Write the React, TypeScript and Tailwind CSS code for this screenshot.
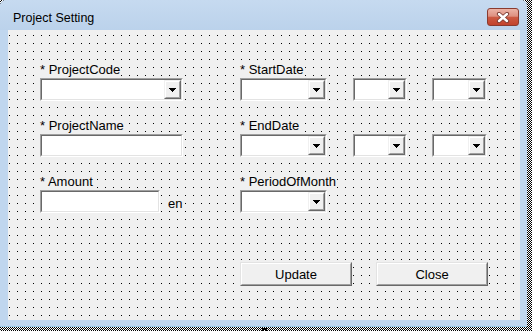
import React from "react";

const FONT = "font-['Liberation_Sans',Arial,sans-serif]";

function Arrow() {
  return (
    <svg width="7" height="4" viewBox="0 0 7 4" shapeRendering="crispEdges">
      <rect x="0" y="0" width="7" height="1" fill="#000" />
      <rect x="1" y="1" width="5" height="1" fill="#000" />
      <rect x="2" y="2" width="3" height="1" fill="#000" />
      <rect x="3" y="3" width="1" height="1" fill="#000" />
    </svg>
  );
}

function DropBtn() {
  return (
    <div className="w-[17px] h-full border border-t-[#f0f0f0] border-l-[#f0f0f0] border-r-[#696969] border-b-[#696969] bg-[#f0f0f0]">
      <div className="w-full h-full border border-t-white border-l-white border-r-[#a0a0a0] border-b-[#a0a0a0] flex items-center justify-center">
        <Arrow />
      </div>
    </div>
  );
}

function Sunken({ w, combo }: { w: string; combo?: boolean }) {
  return (
    <div className={`${w} h-[23px] flex border border-t-[#a0a0a0] border-l-[#a0a0a0] border-r-white border-b-white`}>
      <div className="flex-1 flex justify-end border border-t-[#696969] border-l-[#696969] border-r-[#e3e3e3] border-b-[#e3e3e3] bg-white">
        {combo ? <DropBtn /> : null}
      </div>
    </div>
  );
}

function Label({ text }: { text: string }) {
  return (
    <div className="h-[15px] flex">
      <span className="text-[13px] leading-[15px] text-black bg-[#f0f0f0] pr-[1px] whitespace-pre">{text}</span>
    </div>
  );
}

function Btn({ text }: { text: string }) {
  return (
    <div className="w-[112px] h-[24px] border border-t-[#e3e3e3] border-l-[#e3e3e3] border-r-[#696969] border-b-[#696969] bg-[#f0f0f0]">
      <div className="w-full h-full border border-t-white border-l-white border-r-[#a0a0a0] border-b-[#a0a0a0] flex items-center justify-center text-[13px] leading-[15px] text-black">
        {text}
      </div>
    </div>
  );
}

function DateRow() {
  return (
    <div className="flex">
      <Sunken w="w-[87px]" combo />
      <div className="ml-[26px]">
        <Sunken w="w-[54px]" combo />
      </div>
      <div className="ml-[25px]">
        <Sunken w="w-[55px]" combo />
      </div>
    </div>
  );
}

export default function App() {
  return (
    <div
      className={`${FONT} relative w-[532px] h-[331px] overflow-hidden bg-white bg-[image:conic-gradient(#000_25%,#fff_0_50%,#000_0_75%,#fff_0)] bg-[length:2px_2px]`}
    >
      <div className="w-[527px] h-[327px] rounded-t-[6px] bg-[#c0d6ee] flex flex-col border-b border-b-[#9ccbe8]">
        {/* Title bar */}
        <div className="h-[30px] flex justify-between items-start bg-[linear-gradient(to_bottom,#c6daf0,#bbd2eb)] rounded-t-[6px]">
          <div className="pl-[13px] pt-[11px] text-[12.5px] leading-[15px] text-black">Project Setting</div>
          <div className="mt-[8px] mr-[8px] w-[32px] h-[18px] rounded-[3px] border border-[#8a3b2f] bg-[linear-gradient(to_bottom,#ecb4a7_0%,#de9080_45%,#cc5a43_52%,#c2432d_100%)] flex items-center justify-center">
            <svg width="14" height="11" viewBox="0 0 14 11">
              <path d="M3 2 L11 9 M11 2 L3 9" stroke="#7a3b33" strokeWidth="4.2" strokeLinecap="round" />
              <path d="M3 2 L11 9 M11 2 L3 9" stroke="#ffffff" strokeWidth="2.4" strokeLinecap="round" />
            </svg>
          </div>
        </div>
        {/* Client area */}
        <div className="ml-[8px] w-[512px] h-[290px] bg-[#f0f0f0] bg-[image:conic-gradient(at_1px_1px,transparent_270deg,#000_0)] bg-[length:8px_8px] bg-[position:1px_5px]">
          <div className="flex flex-col pt-[32px] pl-[32px]">
            {/* Row 1 */}
            <div className="flex">
              <div className="w-[200px] flex flex-col gap-px">
                <Label text="* ProjectCode" />
                <Sunken w="w-[143px]" combo />
              </div>
              <div className="flex flex-col gap-px">
                <Label text="* StartDate" />
                <DateRow />
              </div>
            </div>
            {/* Row 2 */}
            <div className="flex mt-[17px]">
              <div className="w-[200px] flex flex-col gap-px">
                <Label text="* ProjectName" />
                <Sunken w="w-[143px]" />
              </div>
              <div className="flex flex-col gap-px">
                <Label text="* EndDate" />
                <DateRow />
              </div>
            </div>
            {/* Row 3 */}
            <div className="flex mt-[17px]">
              <div className="w-[200px] flex flex-col gap-px">
                <Label text="* Amount" />
                <div className="flex">
                  <Sunken w="w-[120px]" />
                  <span className="ml-[7px] mt-[6px] h-[15px] text-[13px] leading-[15px] bg-[#f0f0f0] px-px">en</span>
                </div>
              </div>
              <div className="flex flex-col gap-px">
                <Label text="* PeriodOfMonth" />
                <Sunken w="w-[87px]" combo />
              </div>
            </div>
            {/* Buttons */}
            <div className="flex mt-[49px] pl-[200px] gap-[24px]">
              <Btn text="Update" />
              <Btn text="Close" />
            </div>
          </div>
        </div>
      </div>
      <div className="absolute left-[262px] top-[328px] w-[5px] h-[3px] border-2 border-b-0 border-black bg-white" />
    </div>
  );
}
